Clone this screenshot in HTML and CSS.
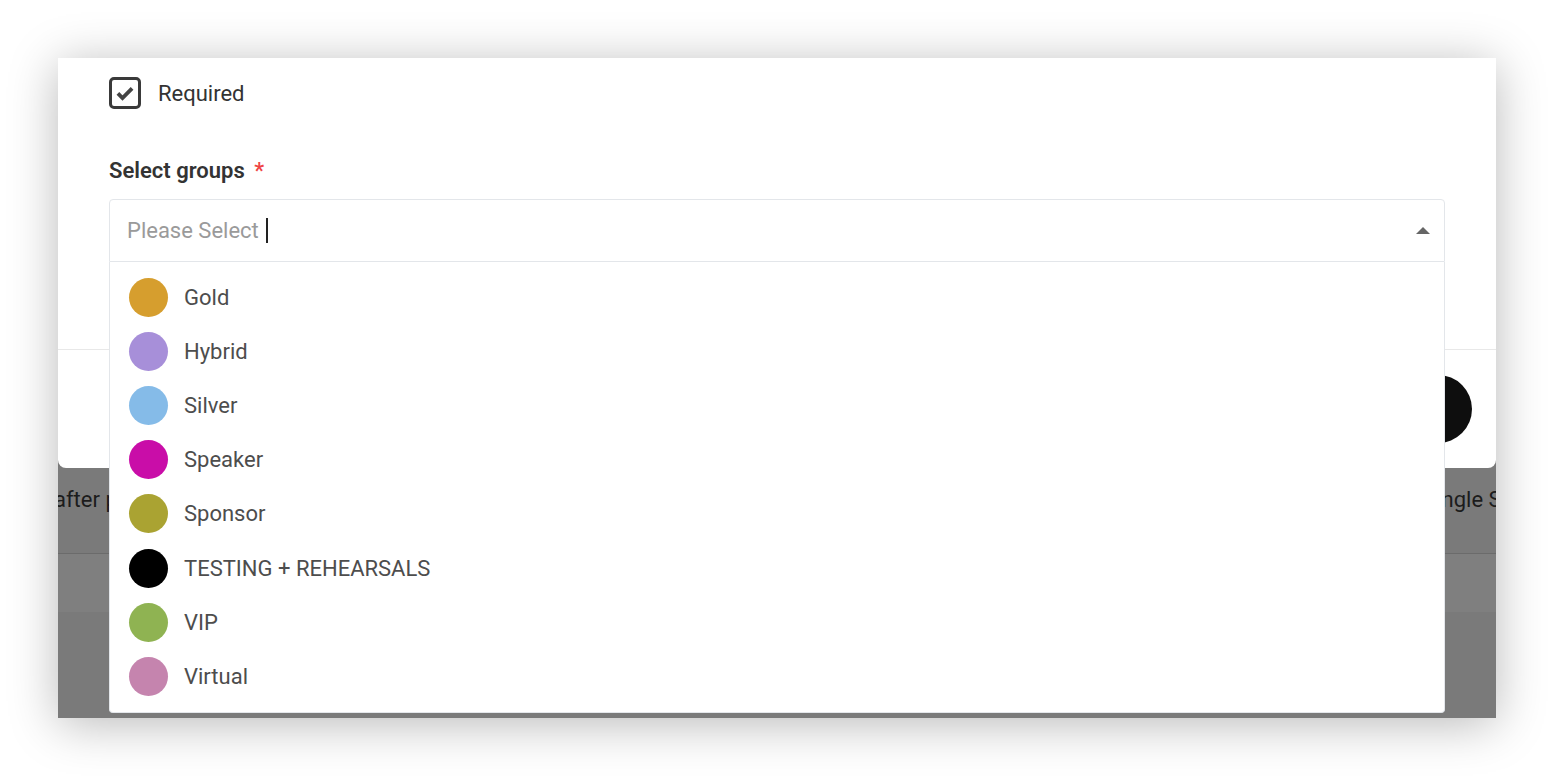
FILE: index.html
```html
<html>
<head>
    <title>Select groups</title>
    <meta name="viewport" content="width=device-width, initial-scale=1">
    <link rel="stylesheet" href="styles.css">
</head>
<body>

    <div class="window">

        <div class="modal">
            <div class="modalBody">
                <label class="checkRow">
                    <span class="checkBox">
                        <svg viewBox="0 0 24 24" width="20" height="20">
                            <path d="M3.5 12.5 L9 18 L20.5 6.5" fill="none" stroke="#444" stroke-width="4.6" stroke-linejoin="miter"/>
                        </svg>
                    </span>
                    <span class="checkText">Required</span>
                </label>

                <div class="fieldLabel">Select groups <span class="star">*</span></div>

                <div class="selectBox">
                    <div class="selectInput">
                        <span class="placeholder">Please Select</span>
                        <span class="caret"></span>
                        <span class="arrowUp"></span>
                    </div>

                    <ul class="optionList">
                        <li class="option"><span class="dot" style="background:#d69e2e"></span>Gold</li>
                        <li class="option"><span class="dot" style="background:#a78fd9"></span>Hybrid</li>
                        <li class="option"><span class="dot" style="background:#85bbe8"></span>Silver</li>
                        <li class="option"><span class="dot" style="background:#c90da8"></span>Speaker</li>
                        <li class="option"><span class="dot" style="background:#aaa332"></span>Sponsor</li>
                        <li class="option"><span class="dot" style="background:#000000"></span>TESTING + REHEARSALS</li>
                        <li class="option"><span class="dot" style="background:#8fb352"></span>VIP</li>
                        <li class="option"><span class="dot" style="background:#c584ae"></span>Virtual</li>
                    </ul>
                </div>
            </div>

            <div class="modalFooter">
                <button class="saveButton">Save</button>
            </div>
        </div>

        <!-- page behind the overlay -->
        <div class="pageRow">
            <span class="pageText">after purchase</span>
            <span class="pageText pageTextRight">Single Session</span>
        </div>
        <div class="pageBand"></div>

    </div>

</body>
</html>
```

FILE: styles.css
```css
body {
    margin: 0px;
    padding: 58px;
    background-color: #ffffff;
    font-family: Roboto, "Liberation Sans", Arial, sans-serif;
}

.window {
    width: 1438px;
    height: 660px;
    overflow: hidden;
    background-color: #7a7a7a;
    box-shadow: 0 6px 46px rgba(0, 0, 0, 0.28);
}

/*  === Modal === */

.modal {
    position: relative;
    z-index: 2;
    background-color: #ffffff;
    border-radius: 0 0 8px 8px;
}

.modalBody {
    padding: 19px 51px 87px 51px;
}

.checkRow {
    display: flex;
    align-items: center;
    gap: 17px;
    height: 32px;
}

.checkBox {
    display: flex;
    align-items: center;
    justify-content: center;
    width: 26px;
    height: 26px;
    border: 3px solid #3a3a3a;
    border-radius: 5px;
}

.checkText {
    font-size: 22px;
    color: #333333;
}

.fieldLabel {
    margin-top: 50px;
    font-size: 22px;
    line-height: 24px;
    font-weight: 600;
    color: #333333;
}

.star {
    color: #ef4444;
    margin-left: 4px;
}

.selectBox {
    position: relative;
    margin-top: 16px;
}

.selectInput {
    display: flex;
    align-items: center;
    height: 61px;
    padding: 0 17px;
    border: 1px solid #e3e6ea;
    border-radius: 4px 4px 0 0;
}

.placeholder {
    font-size: 22px;
    color: #9a9a9a;
}

.caret {
    width: 2px;
    height: 25px;
    margin-left: 7px;
    background-color: #222222;
}

.arrowUp {
    margin-left: auto;
    margin-right: -3px;
    width: 0;
    height: 0;
    border-left: 7px solid transparent;
    border-right: 7px solid transparent;
    border-bottom: 7px solid #666666;
}

.optionList {
    position: absolute;
    top: 100%;
    left: 0;
    right: 0;
    z-index: 5;
    margin: 0;
    padding: 8px 0;
    list-style: none;
    background-color: #ffffff;
    border: 1px solid #e3e6ea;
    border-top: none;
    border-radius: 0 0 4px 4px;
}

.option {
    display: flex;
    align-items: center;
    gap: 16px;
    height: 54.2px;
    padding: 0 19px;
    font-size: 22px;
    color: #4d4d4d;
}

.dot {
    width: 39px;
    height: 39px;
    border-radius: 50%;
}

.modalFooter {
    display: flex;
    justify-content: flex-end;
    align-items: center;
    height: 118px;
    padding-right: 24px;
    border-top: 1px solid #e8e8e8;
}

.saveButton {
    width: 160px;
    height: 68px;
    border: none;
    border-radius: 34px;
    background-color: #0e0e0e;
    color: #ffffff;
    font-size: 20px;
}

/*  === Page behind overlay === */

.pageRow {
    display: flex;
    justify-content: space-between;
    align-items: center;
    height: 87px;
    border-bottom: 1px solid #6b6b6b;
    margin-top: -2px;
}

.pageText {
    font-size: 22px;
    color: #1c1c1c;
    white-space: nowrap;
    margin-left: -4px;
    padding-bottom: 34px;
    padding-top: 14px;
}

.pageTextRight {
    margin-right: -70px;
}

.pageBand {
    height: 58px;
    background-color: #7f7f7f;
}
```
